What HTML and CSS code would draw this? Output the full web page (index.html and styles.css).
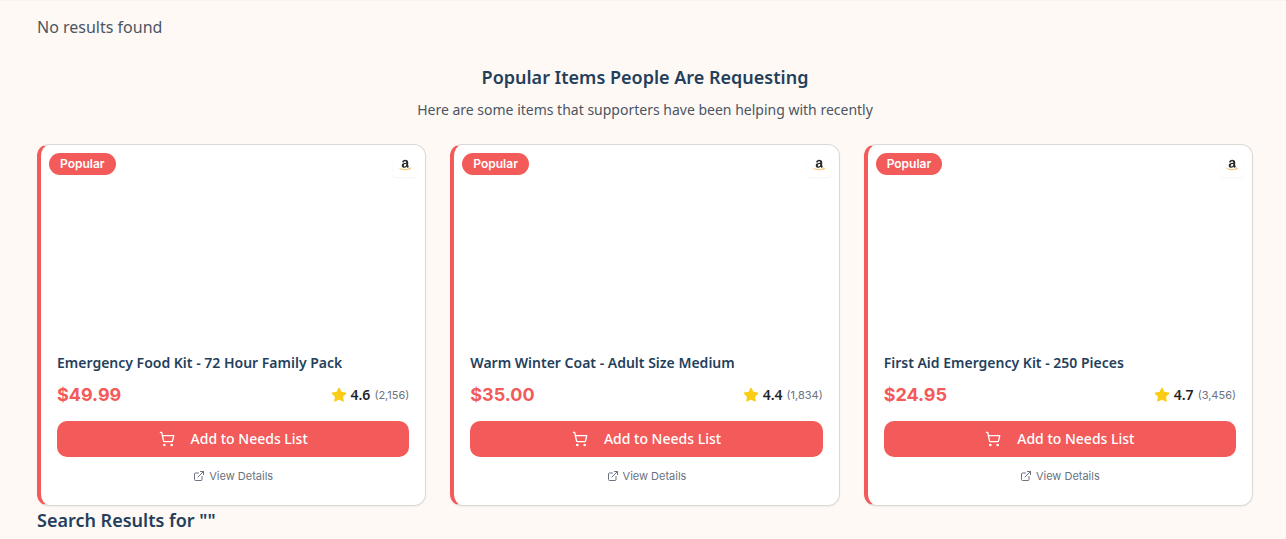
FILE: index.html
```html
<!DOCTYPE html>
<html lang="en">
<head>
<meta charset="utf-8">
<meta name="viewport" content="width=device-width, initial-scale=1">
<title>Search items</title>
<link rel="stylesheet" href="styles.css">
</head>
<body>
<svg class="sprite" aria-hidden="true">
  <symbol id="cart" viewBox="0 0 24 24"><circle cx="8" cy="21" r="1"/><circle cx="19" cy="21" r="1"/><path d="M2.05 2.05h2l2.66 12.42a2 2 0 0 0 2 1.58h9.78a2 2 0 0 0 1.95-1.57l1.65-7.43H5.12"/></symbol>
  <symbol id="external" viewBox="0 0 24 24"><path d="M15 3h6v6M10 14 21 3M18 13v6a2 2 0 0 1-2 2H5a2 2 0 0 1-2-2V8a2 2 0 0 1 2-2h6"/></symbol>
  <symbol id="star" viewBox="0 0 24 24"><path d="M12 2l3.09 6.26L22 9.27l-5 4.87 1.18 6.88L12 17.77l-6.18 3.25L7 14.14 2 9.27l6.91-1.01z"/></symbol>
  <symbol id="store" viewBox="0 0 16 16"><path class="store-a" d="M5 5.3C5.3 3.5 6.5 2.7 8.2 2.7c2 0 3 .9 3 2.7v2.9c0 .6.3.9.7 1.4l-1.4 1.2c-.5-.4-.7-.7-.9-1.1-1.6 1.8-4.900 1.300-4.900-1.300 0-2 1.700-2.800 4.500-2.800 0-1-.2-1.500-1.100-1.500-.7 0-1.100.4-1.300 1.200zM9.200 7c-1.500 0-2.400.3-2.400 1.400 0 1.600 2.400 1.300 2.400-.7z"/><path class="store-smile" d="M2.500 11.300c3 1.900 7.500 2 10.500.4M11.300 11.100l2.200-.1-.6 1.400"/></symbol>
</svg>
<main class="page">
  <p class="status">No results found</p>
  <section class="popular">
    <header class="intro">
      <h2 class="heading">Popular Items People Are Requesting</h2>
      <p class="lead">Here are some items that supporters have been helping with recently</p>
    </header>
    <div class="grid">
      <article class="card">
        <div class="media"><span class="badge">Popular</span><span class="store"><svg><use href="#store"/></svg></span></div>
        <div class="body">
          <h3 class="title">Emergency Food Kit - 72 Hour Family Pack</h3>
          <div class="meta"><span class="price">$49.99</span><span class="rating"><svg class="star"><use href="#star"/></svg><span class="score">4.6</span><span class="count">(2,156)</span></span></div>
          <button class="add" type="button"><svg class="cart"><use href="#cart"/></svg>Add to Needs List</button>
          <a class="details" href="#"><svg class="external"><use href="#external"/></svg>View Details</a>
        </div>
      </article>
      <article class="card">
        <div class="media"><span class="badge">Popular</span><span class="store"><svg><use href="#store"/></svg></span></div>
        <div class="body">
          <h3 class="title">Warm Winter Coat - Adult Size Medium</h3>
          <div class="meta"><span class="price">$35.00</span><span class="rating"><svg class="star"><use href="#star"/></svg><span class="score">4.4</span><span class="count">(1,834)</span></span></div>
          <button class="add" type="button"><svg class="cart"><use href="#cart"/></svg>Add to Needs List</button>
          <a class="details" href="#"><svg class="external"><use href="#external"/></svg>View Details</a>
        </div>
      </article>
      <article class="card">
        <div class="media"><span class="badge">Popular</span><span class="store"><svg><use href="#store"/></svg></span></div>
        <div class="body">
          <h3 class="title">First Aid Emergency Kit - 250 Pieces</h3>
          <div class="meta"><span class="price">$24.95</span><span class="rating"><svg class="star"><use href="#star"/></svg><span class="score">4.7</span><span class="count">(3,456)</span></span></div>
          <button class="add" type="button"><svg class="cart"><use href="#cart"/></svg>Add to Needs List</button>
          <a class="details" href="#"><svg class="external"><use href="#external"/></svg>View Details</a>
        </div>
      </article>
    </div>
  </section>
  <h2 class="heading">Search Results for ""</h2>
</main>
</body>
</html>
```
FILE: styles.css
```css
* { box-sizing: border-box; }
body { margin: 0; background: #fef9f5; color: #1f2328; font-family: "Noto Sans", "Liberation Sans", sans-serif; font-size: 14px; line-height: 20px; }
h2, h3, p { margin: 0; }
.sprite { display: none; }
.page { padding: 14px 33px 0 37px; border-top: 1px solid #f9f3ef; }
.status { font-size: 16px; line-height: 24px; color: #4b5563; }
.popular { padding-top: 24px; }
.intro { text-align: center; margin-bottom: 24px; }
.heading { font-size: 18px; line-height: 28px; font-weight: 600; color: #243f5c; }
.popular .heading { margin-bottom: 9px; }
.lead { color: #4b5563; }
.grid { display: grid; grid-template-columns: repeat(3, 1fr); gap: 24px; }
.card { background: #fff; border: 1px solid #dcd8d4; border-left: 4px solid #f35a5a; border-radius: 12px; box-shadow: 0 1px 2px rgb(0 0 0 / 5%); overflow: hidden; }
.media { height: 192px; padding: 8px; display: flex; justify-content: space-between; align-items: flex-start; }
.badge { padding: 3px 11px; border-radius: 11px; background: #f35a5a; color: #fff; font-family: Inter, sans-serif; font-size: 12px; line-height: 16px; font-weight: 600; }
.store { padding: 4px; border-radius: 4px; box-shadow: 0 1px 2px rgb(0 0 0 / 5%); }
.store svg { display: block; width: 16px; height: 16px; }
.store-a { fill: #2b2b2b; }
.store-smile { fill: none; stroke: #fbc06a; stroke-width: 1; }
.body { padding: 16px; display: flex; flex-direction: column; }
.title { font-size: 14px; line-height: 20px; font-weight: 600; color: #243f5c; }
.meta { display: flex; justify-content: space-between; align-items: center; margin: 8px 0 12px; }
.price { font-size: 18px; line-height: 28px; font-weight: 700; color: #f35a5a; font-family: Inter, sans-serif; }
.rating { display: flex; align-items: center; gap: 4px; }
.star { width: 16px; height: 16px; fill: #facc15; stroke: #facc15; stroke-width: 2; stroke-linejoin: round; }
.score { font-weight: 600; }
.count { font-family: Inter, sans-serif; font-size: 11px; color: #6b7280; }
.add { display: flex; justify-content: center; align-items: center; gap: 16px; height: 36px; border: 0; border-radius: 10px; background: #f35a5a; color: #fff; font: inherit; font-weight: 500; cursor: pointer; }
.cart { width: 16px; height: 16px; }
.cart, .external { fill: none; stroke: currentColor; stroke-width: 2; stroke-linecap: round; stroke-linejoin: round; }
.details { display: flex; justify-content: center; align-items: center; gap: 4px; margin-top: 8px; padding: 3px 0 5px; font-family: Inter, sans-serif; font-size: 11px; line-height: 16px; color: #6b7280; text-decoration: none; }
.external { width: 12px; height: 12px; }
```
